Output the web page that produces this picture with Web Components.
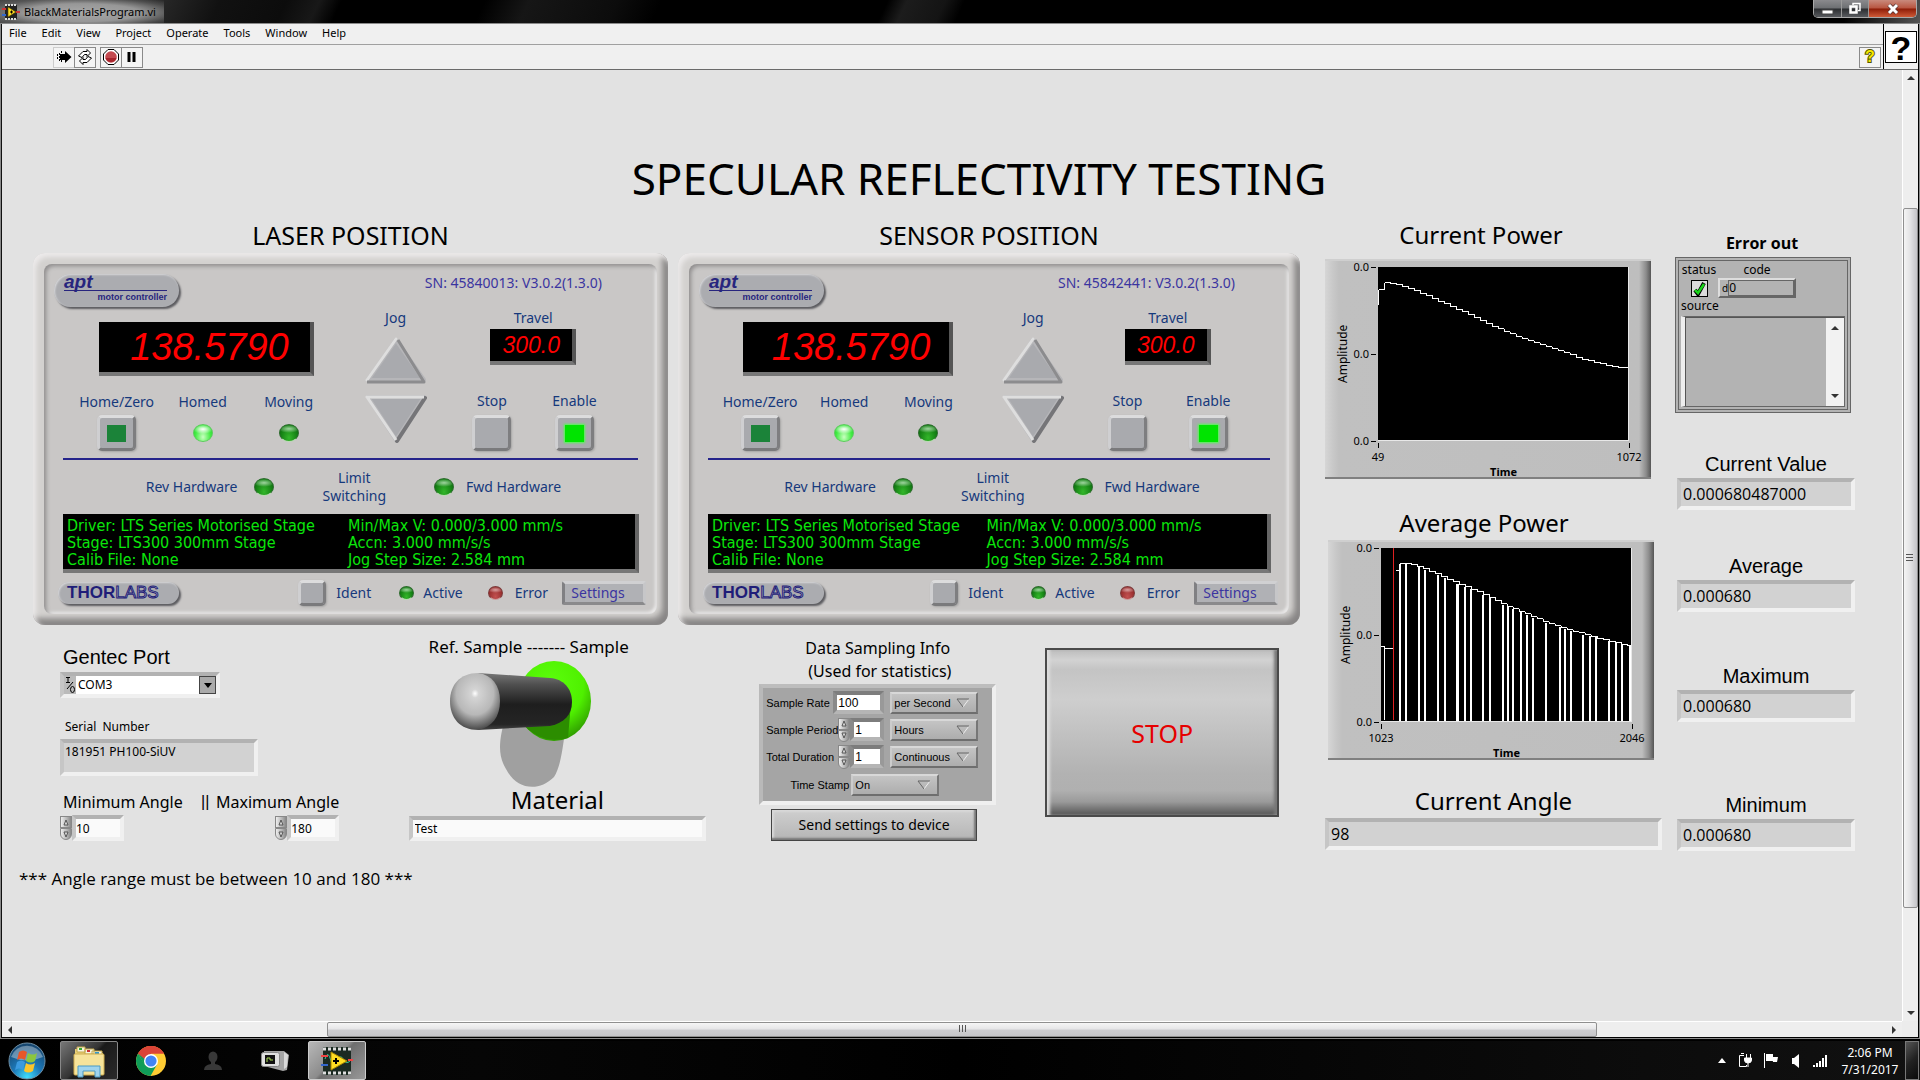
<!DOCTYPE html>
<html lang="en">
<head>
<meta charset="utf-8">
<title>BlackMaterialsProgram.vi</title>
<style>
  html, body { margin: 0; height: 100%; }
  body {
    font-family: "Noto Sans", "Open Sans", sans-serif;
    font-size: 16px;
    color: #000;
    background: #000;
    overflow: hidden;
  }
</style>
</head>
<body>
<vi-desktop></vi-desktop>
<script>
const BASE = `
  *, *::before, *::after { box-sizing: border-box; }
  button, input, select, textarea { font: inherit; color: inherit; margin: 0; }
  h1, h2, h3, p { margin: 0; font-weight: normal; }
  button { cursor: pointer; }
`;

function define(name, css, html) {
  customElements.define(name, class extends HTMLElement {
    connectedCallback() {
      if (this.shadowRoot) return;
      const root = this.attachShadow({ mode: "open" });
      const t = document.createElement("template");
      t.innerHTML = `<style>${BASE}${css}</style>` + (typeof html === "function" ? html(this) : html);
      root.append(t.content.cloneNode(true));
    }
  });
}

/* ---------- Desktop and window frame ---------- */

define("vi-desktop", `
  :host { display: flex; flex-direction: column; height: 100vh; background: #000; }
  .window { flex: 1; min-height: 0; display: flex; flex-direction: column;
    border: 2px solid #000; border-top-width: 1px; border-left-color: #111;
    outline: 1px solid #8a8a8a; outline-offset: -1px; margin: 0 0 2px; }
  .body { flex: 1; min-height: 0; display: grid; grid-template-columns: 1fr 16px; grid-template-rows: 1fr 16px; background: #ececec; }
`, `
  <title-bar>BlackMaterialsProgram.vi</title-bar>
  <div class="window">
    <window-header></window-header>
    <div class="body">
      <front-panel></front-panel>
      <scroll-bar dir="v"></scroll-bar>
      <scroll-bar dir="h"></scroll-bar>
    </div>
  </div>
  <task-bar></task-bar>
`);

define("title-bar", `
  :host { display: flex; justify-content: space-between; height: 23px; color: #000; font-size: 11px; flex: none;
    background: linear-gradient(115deg, #444 0, #333 120px, #111 200px, #0c0c0c 260px, #181818 290px, #000 310px, #000 440px, #161616 480px, #0c0c0c 560px, #000 600px, #000 46%, #1c1c1c 47%, #141414 49%, #000 50%, #000 96%, #555 100%); }
  .name { display: flex; align-items: center; gap: 4px; height: 23px; padding: 0 8px 0 2px;
    background: radial-gradient(ellipse at 50% 55%, #a8a8a8 0, #979797 50%, #6a6a6a88 80%, transparent 100%); }
  .name span { line-height: 20px; font-size: 11px; }
  svg { display: block; }
  .controls { display: flex; height: 18px; margin-right: 3px; border: 1px solid #a9a9a9; border-top: 0; border-radius: 0 0 5px 5px; overflow: hidden; }
  .controls button { border: 0; border-right: 1px solid #999; padding: 0; width: 28px; display: grid; place-items: center;
    background: linear-gradient(#8a8a8d 0, #6d6f72 48%, #2b2d30 52%, #585b5f 100%); }
  .controls button:nth-child(2) { width: 27px; }
  .controls button.close { width: 47px; border-right: 0; background: linear-gradient(#c98a7c 0, #b8543f 48%, #8d1c07 52%, #cf5a37 100%); }
`, `
  <div class="name">
    <svg width="18" height="18" viewBox="0 0 18 18">
      <rect x="3" y="2" width="12" height="14" fill="#222"/>
      <path d="M3 2h12M3 16h12" stroke="#ddd" stroke-width="2" stroke-dasharray="2 1"/>
      <path d="M0 6h4M14 9h4" stroke="#c33" stroke-width="2"/><path d="M0 12h4" stroke="#36c" stroke-width="2"/>
      <path d="M6 4l8 5-8 5z" fill="#fd2" stroke="#540" stroke-width=".6"/><path d="M8 9h3M9.500 7.500v3" stroke="#000"/>
    </svg>
    <span><slot></slot></span>
  </div>
  <div class="controls">
    <button aria-label="Minimize"><svg width="13" height="12"><rect x="1" y="7" width="11" height="4" fill="#fff" stroke="#444"/></svg></button>
    <button aria-label="Restore"><svg width="14" height="13"><path d="M5 3V1.500h7v7h-2" fill="none" stroke="#fff" stroke-width="1.500"/><rect x="2.500" y="4.500" width="6" height="6" fill="none" stroke="#fff" stroke-width="2.500"/></svg></button>
    <button class="close" aria-label="Close"><svg width="14" height="12"><path d="M3 2l8 8M11 2l-8 8" stroke="#533" stroke-width="4.500"/><path d="M3 2l8 8M11 2l-8 8" stroke="#fff" stroke-width="3"/></svg></button>
  </div>
`);

define("window-header", `
  :host { display: grid; grid-template-columns: 1fr 35px; height: 46px; flex: none; background: #f0f0f0; border-bottom: 1px solid #6a6a6a; }
  nav { display: flex; gap: 15px; align-items: center; height: 21px; padding: 0 7px 2px; font-size: 11px; border-bottom: 1px solid #a0a0a0; }
  nav a { color: #000; text-decoration: none; line-height: 18px; }
  .tools { display: flex; align-items: center; height: 24px; padding: 0 2px 0 51px; }
  .tools button { width: 22px; height: 21px; padding: 0; border: 1px solid #8a8a8a; background: #f4f4f4; display: grid; place-items: center; }
  .tools button.run { border-color: #ccc; border-right: 0; width: 21px; }
  .tools button.stop { margin-left: 4px; border-right: 0; width: 21px; }
  .tools button.help { margin-left: auto; }
  .vi { border-left: 1px solid #000; display: grid; place-items: center; }
  .vi b { width: 32px; height: 32px; border: 1px solid #000; background: #fff; display: grid; place-items: center; font: bold 34px/32px "Liberation Sans", Arial, sans-serif; }
  .help b { font: bold 16px/18px "Liberation Sans", sans-serif; color: #f4e800; -webkit-text-stroke: 2px #555500; paint-order: stroke fill; }
`, `
  <div>
    <nav><a href="#">File</a><a href="#">Edit</a><a href="#">View</a><a href="#">Project</a><a href="#">Operate</a><a href="#">Tools</a><a href="#">Window</a><a href="#">Help</a></nav>
    <div class="tools">
      <button class="run" aria-label="Run"><svg width="16" height="14"><path d="M1.500 4v6M3.500 3v8M5.500 1v12" stroke="#000" stroke-dasharray="2 1"/><path d="M4 4h5V1l6.500 6L9 13v-3H4z" fill="#000"/></svg></button>
      <button aria-label="Run continuously"><svg width="16" height="16" fill="#fff" stroke="#000"><path d="M1.500 7L6 2.500h4V.5L13.500 4 10 7.500V5.500H7.500L5 8.500z"/><path d="M14.500 9L10 13.500H6v2L2.500 12 6 8.500v2h2.500L11 7.500z"/></svg></button>
      <button class="stop" aria-label="Abort"><svg width="16" height="16"><path d="M5 .5h6L15.500 5v6L11 15.500H5L.5 11V5z" fill="#fff" stroke="#000"/><circle cx="8" cy="8" r="5.800" fill="#c44a50"/><path d="M2.500 9h11a5.800 5.800 0 0 1-11 0z" fill="#a8242c"/></svg></button>
      <button aria-label="Pause"><svg width="12" height="12"><path d="M3 1v10M8 1v10" stroke="#000" stroke-width="3"/></svg></button>
      <button class="help" aria-label="Context help"><b>?</b></button>
    </div>
  </div>
  <div class="vi"><b>?</b></div>
`);

define("scroll-bar", `
  :host { display: flex; align-items: center; justify-content: space-between; background: #eeeeee; min-width: 0; min-height: 0; }
  :host([dir="v"]) { flex-direction: column; border-left: 1px solid #fff; }
  :host([dir="h"]) { border-top: 1px solid #fff; }
  .arrow { flex: none; width: 16px; height: 16px; display: grid; place-items: center; }
  .track { flex: 1; align-self: stretch; display: flex; }
  :host([dir="v"]) .track { flex-direction: column; }
  .before { flex: 122; } .thumb { flex: 700; } .after { flex: 97; }
  :host([dir="h"]) .before { flex: 309; } :host([dir="h"]) .thumb { flex: 1268; } :host([dir="h"]) .after { flex: 289; }
  .thumb { border: 1px solid #8f8f8f; border-radius: 2px; display: grid; place-items: center; background: linear-gradient(90deg, #f4f4f4, #e2e2e4 50%, #c4c4c8); }
  :host([dir="h"]) .thumb { background: linear-gradient(#f6f6f6, #e6e6e8 45%, #cdcdd0 55%, #c6c6c9); }
`, el => {
  const v = el.getAttribute("dir") === "v";
  const a = v ? "M0 5L4 1l4 4z" : "M5 0L1 4l4 4z", b = v ? "M0 1l4 4 4-4z" : "M1 0l4 4-4 4z";
  const s = v ? 'width="8" height="6"' : 'width="6" height="8"';
  const grip = v ? "M0 1.500h7M0 4.500h7M0 7.500h7" : "M1.500 0v7M4.500 0v7M7.500 0v7";
  return `<div class="arrow"><svg ${s}><path d="${a}" fill="#333"/></svg></div>
  <div class="track"><div class="before"></div><div class="thumb"><svg width="9" height="9"><path d="${grip}" stroke="#555"/></svg></div><div class="after"></div></div>
  <div class="arrow"><svg ${s}><path d="${b}" fill="#333"/></svg></div>`;
});

/* ---------- Shared controls ---------- */

const BEVEL = `border: 4px solid; border-color: #b2b2b2 #f0f0f0 #f0f0f0 #c6c6c6;`;

define("value-field", `
  :host { display: block; font-family: "Liberation Sans", Arial, sans-serif; }
  label { display: block; text-align: center; font-size: 20px; line-height: 24px; }
  :host([large]) label { font: 24px/30px "Noto Sans", sans-serif; }
  input { display: block; width: 100%; height: 32px; margin-top: 2px; padding: 0 2px; ${BEVEL} border-radius: 0; background: #d2d2d2; font: 16px "Open Sans", sans-serif; outline: 0; }
`, el => `<label for="v">${el.getAttribute("label")}</label><input id="v" readonly value="${el.getAttribute("value")}">`);

define("spin-arrows", `
  :host { display: flex; flex-direction: column; width: 12px; height: 24px; flex: none; }
  button { flex: 1; padding: 0; border: 1px solid #888; background: linear-gradient(90deg, #eee, #b4b4b4 60%, #888); display: grid; place-items: center; }
  button:first-child { border-radius: 6px 6px 0 0; border-bottom: 0; }
  button:last-child { border-radius: 0 0 6px 6px; }
`, `
  <button aria-label="Increase"><svg width="6" height="7"><path d="M3 1L1 6h4z" fill="#ddd" stroke="#555"/></svg></button>
  <button aria-label="Decrease"><svg width="6" height="7"><path d="M3 6L1 1h4z" fill="#ddd" stroke="#555"/></svg></button>
`);

/* ---------- Motor controller ---------- */

define("lamp-led", `
  :host { display: block; width: 20px; height: 18px; flex: none; }
  :host([small]) { width: 15px; height: 14px; }
  i { display: block; width: 100%; height: 100%; border-radius: 50%; border: 1px solid #2c6a2c; border-bottom-color: #b7dcb0;
    background: radial-gradient(ellipse 60% 25% at 50% 24%, #9fd49f 0, transparent 100%), radial-gradient(ellipse at 50% 80%, #33b62a, #127c12 70%, #0c5c10); }
  :host([tone="lit"]) i { border-color: #5ccc5c; background: radial-gradient(ellipse 55% 30% at 50% 26%, #fff 0, transparent 100%), radial-gradient(ellipse at 50% 75%, #c8ffc0, #42ec42 60%, #22cc30); }
  :host([tone="red"]) i { border-color: #7c3a3a; border-bottom-color: #c99; background: radial-gradient(ellipse 60% 25% at 50% 24%, #d8a0a0 0, transparent 100%), radial-gradient(ellipse at 50% 80%, #c25050, #9a3030 70%, #7c2020); }
`, `<i></i>`);

define("square-key", `
  :host { display: block; width: 39px; height: 36px; flex: none; }
  :host([small]) { width: 28px; height: 26px; }
  button { width: 100%; height: 100%; padding: 0; border: 3px solid; border-color: #dcdcdd #7e7e80 #7a7a7c #cfcfd1; border-radius: 5px; background: #a9aaae; display: grid; place-items: center; box-shadow: 1px 1px 2px #8888; }
  i { width: 19px; height: 17px; background: #1b8339; }
  :host([tone="lit"]) i { background: #00e400; box-shadow: 0 0 2px 1px #4dff4d; }
  :host([tone="none"]) i { display: none; }
`, el => `<button aria-label="${el.getAttribute("label")}"><i></i></button>`);

define("motor-controller", `
  :host { display: block; padding: 11px; border-radius: 12px; color: #16397c; font-size: 14px; line-height: 18px; background: #d3d1cf;
    box-shadow: inset 3px 4px 5px #eceaea, inset -4px -5px 5px #878585, inset -7px -8px 5px #b0aeac; }
  .face { height: 350px; display: flex; flex-direction: column; padding-top: 10px; border-radius: 8px; background: #c9c7c6;
    box-shadow: inset 2px 2px 4px #8d8b8b, inset -2px -2px 3px #efeeee; }
  .head { display: flex; justify-content: space-between; padding: 0 9% 0 10px; color: #3b35a0; }
  .pill { background: #abacb0; box-shadow: 2px 2px 2px #5c5c60, inset 1px 1px 2px #d8d8da; }
  .apt { width: 125px; height: 33px; border-radius: 17px; padding: 0 12px 0 10px; font: bold 9px/9px "Liberation Sans", Arial, sans-serif; color: #27257e; text-align: right; }
  .apt b { display: block; text-align: left; font-size: 19px; line-height: 16px; font-style: italic; border-bottom: 1px solid #27257e; margin-bottom: 2px; }
  .main { display: grid; grid-template-columns: 296fr 110fr 206fr; height: 151px; }
  .display { background: #000; border-right: 4px solid #555; border-bottom: 4px solid #777; color: #f00; font-family: "Liberation Sans", Arial, sans-serif; font-style: italic; text-align: center; }
  .left { display: flex; flex-direction: column; padding: 15px 3% 0 10%; }
  .left .display { height: 54px; font-size: 38px; line-height: 50px; margin: 0 7% 0 10%; padding-left: 10px; }
  .trio { display: grid; grid-template-columns: 1fr 1fr 1fr; margin-top: 17px; row-gap: 4px; place-items: center; }
  .jog { padding-top: 2px; text-align: center; }
  .jog button { display: block; margin: 0 auto; padding: 0; border: 0; background: none; }
  .jog .up { margin-top: 10px; margin-bottom: 6px; }
  .right { padding: 2px 20% 0 0; text-align: center; }
  .right .display { width: 86px; height: 36px; margin: 2px auto 27px; font-size: 23px; line-height: 32px; }
  .duo { display: grid; grid-template-columns: 1fr 1fr; row-gap: 5px; place-items: center; }
  hr { margin: 0 19px; border: 0; height: 2px; flex: none; background: #25248b; }
  .limits { display: flex; justify-content: center; align-items: center; margin-top: 9px; padding-left: 6px; text-align: center; }
  .limits p { margin: 0 48px; }
  .limits .rev { margin-right: 17px; } .limits .fwd { margin-left: 12px; }
  .info { margin: 9px 18px 0 19px; height: 59px; flex: none; padding: 3px 0 0 4px; display: grid; grid-template-columns: 284fr 290fr; background: #000; border-right: 4px solid #666; border-bottom: 4px solid #777;
    color: #0be60b; font-family: "DejaVu Sans Condensed", "DejaVu Sans", Verdana, sans-serif; font-size: 16px; line-height: 17px; white-space: nowrap; }
  .foot { display: flex; align-items: center; margin-top: 7px; padding: 0 11px 0 14px; white-space: nowrap; }
  .thor { width: 121px; height: 22px; border-radius: 11px; padding-left: 9px; margin-right: auto; font: bold 17px/21px "Liberation Sans", Arial, sans-serif; color: #1f1d78; }
  .thor span { color: #c0c0c8; -webkit-text-stroke: 1px #1f1d78; font-weight: normal; }
  .foot .t1 { margin: 0 28px 0 10px; } .foot .t2 { margin: 0 25px 0 9px; } .foot .t3 { margin: 0 14px 0 12px; }
  .settings { width: 84px; height: 24px; padding: 0 12px 0 0; border: 3px solid; border-color: #d0d0d2 #c6c6c8 #8a8a8c #808083; border-radius: 2px; background: #b0b1b5; color: #3b35a0; line-height: 18px; }
`, el => `
  <div class="face">
    <div class="head"><div class="pill apt"><b>apt</b>motor controller</div><div>SN: ${el.getAttribute("sn")}: V3.0.2(1.3.0)</div></div>
    <div class="main">
      <div class="left">
        <div class="display">${el.getAttribute("position")}</div>
        <div class="trio"><span>Home/Zero</span><span>Homed</span><span>Moving</span>
          <square-key label="Home/Zero"></square-key><lamp-led tone="lit"></lamp-led><lamp-led></lamp-led></div>
      </div>
      <div class="jog">Jog
        <button class="up" aria-label="Jog up"><svg width="62" height="47" viewBox="0 0 62 47"><path d="M31 3L59 43H3z" fill="#a9aaae" stroke="#b6b6b9" stroke-width="4" stroke-linejoin="round"/><path d="M31 2L2 43" stroke="#dedede" stroke-width="3" fill="none" stroke-linecap="round"/><path d="M2 45h57L33 3" stroke="#8c8c8e" stroke-width="3" fill="none" stroke-linejoin="round"/></svg></button>
        <button aria-label="Jog down"><svg width="62" height="50" viewBox="0 0 62 50"><path d="M3 3h56L31 46z" fill="#a9aaae" stroke="#b6b6b9" stroke-width="4" stroke-linejoin="round"/><path d="M60 4L32 47" stroke="#757578" stroke-width="4" stroke-linecap="round"/><path d="M31 46L2 3h57" stroke="#dedede" stroke-width="3" fill="none" stroke-linejoin="round"/></svg></button>
      </div>
      <div class="right">Travel
        <div class="display">300.0</div>
        <div class="duo"><span>Stop</span><span>Enable</span><square-key tone="none" label="Stop"></square-key><square-key tone="lit" label="Enable"></square-key></div>
      </div>
    </div>
    <hr>
    <div class="limits"><span class="rev">Rev Hardware</span><lamp-led></lamp-led><p>Limit<br>Switching</p><lamp-led></lamp-led><span class="fwd">Fwd Hardware</span></div>
    <div class="info"><div>Driver: LTS Series Motorised Stage<br>Stage: LTS300 300mm Stage<br>Calib File: None</div><div>Min/Max V: 0.000/3.000 mm/s<br>Accn: 3.000 mm/s/s<br>Jog Step Size: 2.584 mm</div></div>
    <div class="foot"><div class="pill thor">THOR<span>LABS</span></div>
      <square-key small tone="none" label="Ident"></square-key><span class="t1">Ident</span>
      <lamp-led small></lamp-led><span class="t2">Active</span>
      <lamp-led small tone="red"></lamp-led><span class="t3">Error</span>
      <button class="settings">Settings</button></div>
  </div>
`);

/* ---------- Graphs ---------- */

function sample(points, x) {
  for (let i = 1; i < points.length; i++) {
    const [x0, y0] = points[i - 1], [x1, y1] = points[i];
    if (x <= x1) return y0 + (y1 - y0) * (x - x0) / (x1 - x0);
  }
  return points[points.length - 1][1];
}
function staircase(points) {
  let x = points[0][0], d = `M${x} ${points[0][1]}`;
  while (x < 251) { x = Math.min(251, x + 6); d += `H${x}V${Math.round(sample(points, x))}`; }
  return d;
}
const CURVES = {
  current: () => {
    const p = [[7,16],[27,20],[53,31],[84,45],[116,60],[147,73],[175,82],[203,92],[231,99],[251,102]];
    return `<path d="M1 38V23H7V16" /><path d="${staircase(p)}"/>`;
  },
  average: () => {
    const p = [[19,16],[33,17],[57,27],[77,36],[97,44],[122,57],[140,64],[166,75],[191,83],[215,90],[251,99]];
    const bars = [19,25,38,44,57,64,76,77,84,90,102,109,122,128,133,141,147,153,166,180,185,191,203,210,216,229,236,242,250];
    return `<path d="M0 99H4V173M4 101H12V102"/><path d="M13 0V173" stroke="#e02020"/><path d="M15 23H19V16"/><path d="${staircase(p)}"/>
      <path stroke-width="2" d="${bars.map(b => `M${b} ${Math.round(sample(p, b))}V174`).join("")}"/>`;
  }
};

define("power-graph", `
  :host { display: block; }
  h2 { font-size: 24px; line-height: 30px; text-align: center; padding-right: 14px; margin-bottom: 9px; }
  :host([tight]) h2 { margin-bottom: 2px; }
  .frame { height: 220px; padding: 6px 22px 0 10px; display: grid; grid-template-columns: 16px 27px 1fr; grid-template-rows: 174px 24px 14px; font-size: 11px; line-height: 14px;
    background: linear-gradient(90deg, #d6d6d6 0, #c8c8c8 8px, #c0c0c0 14px, #bebebe calc(100% - 12px), #8c8c8c calc(100% - 5px), #555 100%);
    border-top: 2px solid #cfcfcf; box-shadow: inset 0 -2px #808080; }
  .amp { writing-mode: vertical-rl; transform: rotate(180deg); text-align: center; font-size: 12px; line-height: 16px; }
  .ys { display: flex; flex-direction: column; justify-content: space-between; margin: -7px 0; }
  .ys span { display: flex; align-items: center; justify-content: flex-end; gap: 2px; padding-right: 2px; }
  .ys span::after { content: ""; width: 5px; height: 1px; background: #000; }
  .plot { background: #000; min-width: 0; border-bottom: 1px solid #e8e8e8; border-right: 1px solid #e8e8e8; }
  .plot svg { display: block; width: 100%; height: 100%; }
  .xs { grid-column: 3; display: flex; justify-content: space-between; }
  .xs span { width: 32px; margin: 0 -16px; display: flex; flex-direction: column; align-items: center; gap: 2px; padding-top: 2px; }
  .xs span::before { content: ""; width: 1px; height: 5px; background: #000; flex: none; }
  .time { grid-column: 3; text-align: center; font-weight: bold; }
`, el => `
  <h2>${el.getAttribute("label")}</h2>
  <div class="frame">
    <div class="amp">Amplitude</div>
    <div class="ys"><span>0.0</span><span>0.0</span><span>0.0</span></div>
    <div class="plot"><svg viewBox="0 0 251 174" preserveAspectRatio="none" fill="none" stroke="#fff" stroke-width="1" shape-rendering="crispEdges">${CURVES[el.getAttribute("curve")]()}</svg></div>
    <div class="xs"><span>${el.getAttribute("from")}</span><span>${el.getAttribute("to")}</span></div>
    <div class="time">Time</div>
  </div>
`);

define("error-cluster", `
  :host { display: block; font-size: 12px; line-height: 16px; }
  h3 { text-align: center; font: bold 16px/24px "Open Sans", sans-serif; padding-right: 8px; }
  .box { margin: 2px 4px 0 -2px; height: 156px; padding: 1px 2px 2px 2px; background: #b3b3b3; border: 4px double #666; display: flex; flex-direction: column; }
  .top { display: grid; grid-template-columns: 36px 80px; align-items: center; justify-items: center; }
  input[type=checkbox] { appearance: none; width: 17px; height: 17px; border: 1px solid #000; background: #dcdcdc url("data:image/svg+xml,%3Csvg xmlns='http://www.w3.org/2000/svg' viewBox='0 0 15 15'%3E%3Cpath d='M3 9l3 4 6-11' fill='none' stroke='%23000' stroke-width='4'/%3E%3Cpath d='M3 9l3 3 6-9' fill='none' stroke='%2319d419' stroke-width='2.500'/%3E%3C/svg%3E"); }
  .code { display: flex; align-items: center; height: 20px; width: 78px; border: 2px solid; border-color: #ddd #666 #666 #ddd; font-size: 10px; padding-left: 2px; }
  .code input { flex: 1; min-width: 0; height: 16px; border: 1px solid #666; padding: 0; background: #b3b3b3; font-size: 12px; }
  .source { flex: 1; min-height: 0; display: flex; border: 1px solid #666; border-left: 4px solid #eee; box-shadow: inset 1px 1px #555; margin: 2px 0 0; padding: 1px 0 0 1px; }
  textarea { flex: 1; min-width: 0; resize: none; border: 0; background: #b3b3b3; padding: 0; }
  .sb { width: 18px; background: #f2f2f2; display: flex; flex-direction: column; justify-content: space-between; align-items: center; padding: 7px 0; }
`, `
  <h3>Error out</h3>
  <div class="box">
    <div class="top"><label for="st">status</label><label for="cd">code</label>
      <input id="st" type="checkbox" checked><div class="code">d<input id="cd" readonly value="0"></div></div>
    <label class="src" for="sr">source</label>
    <div class="source"><textarea id="sr" readonly></textarea><div class="sb"><svg width="8" height="6"><path d="M0 5L4 1l4 4z" fill="#333"/></svg><svg width="8" height="6"><path d="M0 1l4 4 4-4z" fill="#333"/></svg></div></div>
  </div>
`);

/* ---------- Lower controls ---------- */

define("port-controls", `
  :host { display: block; padding: 20px 0 0 27px; font-size: 12px; }
  .h { display: block; font: 20px/24px "Liberation Sans", Arial, sans-serif; padding-left: 3px; }
  .combo { display: flex; width: 160px; height: 26px; margin-top: 3px; ${BEVEL} background: #fff; }
  .combo i { width: 12px; background: #bbb; flex: none; }
  .combo .pick { flex: 1; display: grid; grid-template-columns: 1fr 17px; }
  .combo select { grid-area: 1 / 1 / 2 / 3; appearance: none; border: 0; background: none; padding: 0 2px; line-height: 18px; }
  .combo b { grid-area: 1 / 2 / 2 / 3; border: 1px solid #444; background: #aaa; display: grid; place-items: center; pointer-events: none; }
  .serial { display: block; line-height: 16px; margin-top: 21px; padding-left: 5px; white-space: pre; }
  .sn { display: block; width: 198px; height: 37px; margin-top: 4px; ${BEVEL} border-radius: 0; background: #d2d2d2; padding: 0 1px; line-height: 18px; resize: none; outline: 0; overflow: hidden; white-space: nowrap; }
  .angles { display: grid; grid-template-columns: 138px 15px auto; margin-top: 16px; font-size: 16px; line-height: 20px; row-gap: 3px; padding-left: 3px; justify-content: start; white-space: nowrap; }
  .bars { font-family: "Liberation Sans", Arial, sans-serif; }
  .spin { display: flex; align-items: center; font-size: 12px; margin-left: -3px; }
  .spin input { width: 52px; height: 26px; ${BEVEL} border-radius: 0; background: #fafafa; padding: 0; outline: 0; }
  .max { grid-column: 3; justify-self: end; }
`, `
  <label class="h" for="port">Gentec Port</label>
  <div class="combo">
    <i><svg width="12" height="18" fill="none" stroke="#000"><path d="M2 1.500h4M4 1.500v5M2 6.500h4M9 6L3 13"/><ellipse cx="8.500" cy="13.500" rx="2" ry="3"/></svg></i>
    <div class="pick"><select id="port"><option>COM3</option></select><b><svg width="8" height="5"><path d="M0 0h8L4 5z"/></svg></b></div>
  </div>
  <label class="serial" for="sn">Serial  Number</label>
  <textarea class="sn" id="sn" readonly>181951 PH100-SiUV</textarea>
  <div class="angles">
    <label for="mn">Minimum Angle</label><span class="bars">||</span><label for="mx">Maximum Angle</label>
    <div class="spin"><spin-arrows></spin-arrows><input id="mn" value="10"></div>
    <div class="spin max"><spin-arrows></spin-arrows><input id="mx" value="180"></div>
  </div>
`);

define("sample-switch", `
  :host { display: block; padding-top: 12px; font-size: 17px; line-height: 20px; }
  p { padding-left: 20px; white-space: nowrap; }
  button { display: block; margin: 4px 0 0 41px; padding: 0; border: 0; background: none; width: 141px; height: 126px; }
  svg { display: block; }
  label { display: block; text-align: center; font-size: 24px; line-height: 25px; }
  input { display: block; width: 100%; height: 25px; margin-top: 4px; ${BEVEL} border-radius: 0; background: #fafafa; font-size: 12px; padding: 0 2px; outline: 0; }
`, `
  <p>Ref. Sample ------- Sample</p>
  <button aria-label="Sample selector">
    <svg width="141" height="126" viewBox="0 0 141 126">
      <defs>
        <radialGradient id="g" cx=".45" cy=".3" r=".75"><stop offset="0" stop-color="#5cff0c"/><stop offset=".6" stop-color="#4ff000"/><stop offset="1" stop-color="#2a8e00"/></radialGradient>
        <linearGradient id="s" x1="0" y1="0" x2="0" y2="1"><stop offset="0" stop-color="#777"/><stop offset=".2" stop-color="#505050"/><stop offset=".55" stop-color="#1e1e1e"/><stop offset=".9" stop-color="#252525"/><stop offset="1" stop-color="#444"/></linearGradient>
        <radialGradient id="k" cx=".5" cy=".36" r=".62"><stop offset="0" stop-color="#fff"/><stop offset=".12" stop-color="#d4d4d4"/><stop offset=".6" stop-color="#b8b8b8"/><stop offset="1" stop-color="#505050"/></radialGradient>
      </defs>
      <path d="M56 55C48 80 48 95 56 108C66 128 88 132 104 116C112 104 114 76 116 62z" fill="#a0a0a0"/>
      <ellipse cx="104" cy="40" rx="37" ry="40" fill="url(#g)"/>
      <path d="M72 62Q90 84 118 77L121 42L104 56z" fill="#2c8d00"/>
      <path d="M28 12L100 17C114 18 122 28 122 41C122 54 114 62 100 65L28 69z" fill="url(#s)"/>
      <path d="M28 12C10 12 0 24 0 40C0 57 10 69 28 69C42 66 50 56 50 40C50 24 42 14 28 12z" fill="url(#k)"/>
    </svg>
  </button>
  <label for="mat">Material</label>
  <input id="mat" value="Test">
`);

define("sampling-info", `
  :host { display: block; padding-top: 12px; }
  h3 { text-align: center; font-size: 16px; line-height: 23px; }
  .box { margin-top: 1px; height: 121px; padding: 1px 14px 3px 3px; border: 4px solid; border-color: #bdbdbd #efefef #efefef #b9b9b9; background: #a5a5a5;
    font: 11px/14px "Liberation Sans", Arial, sans-serif; }
  .row { display: flex; align-items: center; height: 27px; white-space: nowrap; }
  .row label { flex: 1; }
  .row input { height: 23px; width: 51px; border: 4px solid; border-color: #7d7d7d #999 #b5b5b5 #8a8a8a; border-radius: 0; padding: 0 1px; background: #fff; font-size: 12px; outline: 0; }
  .row .n { width: 34px; }
  .pick { display: grid; width: 88px; height: 22px; margin-left: 6px; border: 2px solid; border-color: #d8d8d8 #777 #6e6e6e #ccc; background: linear-gradient(#c4c4c4, #adadad); align-items: center; font-size: 12px; }
  .pick select { grid-area: 1 / 1; appearance: none; border: 0; background: none; padding: 0 0 0 2px; width: 100%; font-size: 11px; }
  .pick svg { grid-area: 1 / 1; justify-self: end; margin-right: 6px; pointer-events: none; }
  .last { padding-right: 39px; height: 29px; }
  .last label { text-align: right; } .last .pick { margin-left: 2px; }
  .send { display: block; width: 206px; height: 32px; margin: 4px 0 0 12px; padding: 0 0 2px; border: 1px solid #444; font-size: 14px; background: linear-gradient(#cfcfcf, #b5b5b5); box-shadow: inset -2px -2px 2px #777, inset 2px 2px 2px #d8d8d8; }
`, () => {
  const tri = `<svg width="14" height="10"><path d="M13 1L7 9" stroke="#eee" fill="none"/><path d="M13 1H1l6 8" stroke="#666" fill="none"/></svg>`;
  const pick = (id, v) => `<div class="pick"><select id="${id}" aria-label="${id}"><option>${v}</option></select>${tri}</div>`;
  return `
  <h3>Data Sampling Info<br>&nbsp;(Used for statistics)</h3>
  <div class="box">
    <div class="row"><label for="rate">Sample Rate</label><input id="rate" value="100">${pick("rate-unit", "per Second")}</div>
    <div class="row"><label for="period">Sample Period</label><spin-arrows></spin-arrows><input class="n" id="period" value="1">${pick("period-unit", "Hours")}</div>
    <div class="row"><label for="total">Total Duration</label><spin-arrows></spin-arrows><input class="n" id="total" value="1">${pick("total-unit", "Continuous")}</div>
    <div class="row last"><label for="stamp">Time Stamp</label>${pick("stamp", "On")}</div>
  </div>
  <button class="send">Send settings to device</button>`;
});

define("stop-button", `
  :host { display: block; padding-top: 23px; }
  button { width: 100%; height: 169px; border: 2px solid #4a4a4a; color: #e60000; font-size: 25px;
    background: linear-gradient(#bdbdbd 0, #d2d2d2 6%, #c4c4c4 12%, #cecece 30%, #b2b2b2 75%, #b0b0b0 85%, #9a9a9a 92%, #555 100%);
    box-shadow: inset 4px 0 3px -1px #ddd, inset -4px 0 3px -1px #777; }
`, `<button><slot></slot></button>`);

/* ---------- Front panel ---------- */

define("front-panel", `
  :host { display: block; min-width: 0; overflow: hidden; background: #e2e2e2; padding: 78px 47px 0 17px; }
  h1 { font-size: 44px; line-height: 60px; text-align: center; padding-left: 84px; }
  h2 { font-size: 25px; line-height: 30px; text-align: center; }
  .main { display: grid; grid-template-columns: minmax(0, 1277fr) minmax(0, 337fr) minmax(0, 178fr); gap: 0 15px; padding-left: 14px; margin-top: 12px; }
  .motion { padding-right: 10px; }
  .stages { display: grid; grid-template-columns: 635fr 622fr; column-gap: 10px; }
  .stages h2 { margin-bottom: 3px; }
  .lower { display: grid; grid-template-columns: 376fr 298fr 53fr 236fr 49fr 234fr 21fr; }
  sampling-info { grid-column: 4; } stop-button { grid-column: 6; }
  .g1 { margin: 0 11px 29px 0; }
  .g2 { margin: 0 8px 26px 3px; }
  .readouts { padding-top: 11px; }
  .m1 { margin-top: 39px; } .m2 { margin-top: 44px; } .m3 { margin-top: 52px; } .m4 { margin-top: 71px; }
  .note { font-family: "Open Sans", sans-serif; font-size: 17px; line-height: 24px; margin-top: 16px; white-space: nowrap; }
`, `
  <h1>SPECULAR REFLECTIVITY TESTING</h1>
  <div class="main">
    <div class="motion">
      <div class="stages">
        <h2>LASER POSITION</h2><h2>SENSOR POSITION</h2>
        <motor-controller sn="45840013" position="138.5790"></motor-controller>
        <motor-controller sn="45842441" position="138.5790"></motor-controller>
      </div>
      <div class="lower">
        <port-controls></port-controls>
        <sample-switch></sample-switch>
        <sampling-info></sampling-info>
        <stop-button>STOP</stop-button>
      </div>
    </div>
    <div class="graphs">
      <power-graph class="g1" label="Current Power" curve="current" from="49" to="1072"></power-graph>
      <power-graph class="g2" tight label="Average Power" curve="average" from="1023" to="2046"></power-graph>
      <value-field large label="Current Angle" value="98"></value-field>
    </div>
    <div class="readouts">
      <error-cluster></error-cluster>
      <value-field class="m1" label="Current Value" value="0.000680487000"></value-field>
      <value-field class="m2" label="Average" value="0.000680"></value-field>
      <value-field class="m3" label="Maximum" value="0.000680"></value-field>
      <value-field class="m4" label="Minimum" value="0.000680"></value-field>
    </div>
  </div>
  <p class="note">*** Angle range must be between 10 and 180 ***</p>
`);

/* ---------- Taskbar ---------- */

define("task-bar", `
  :host { display: flex; align-items: stretch; height: 39px; flex: none; background: linear-gradient(90deg, #000, #060606 25%, #000 50%, #0a0a0a 80%, #111); color: #fff; }
  button { width: 58px; margin-right: 4px; padding: 0; border: 1px solid transparent; border-radius: 2px; background: none; display: grid; place-items: center; }
  .orb { width: 54px; margin-right: 6px; }
  .open { border-color: #888; background: linear-gradient(135deg, #777, #333 45%, #1a1a1a 50%, #2a2a2a); }
  .active { border-color: #ccc; background: linear-gradient(135deg, #b8b8b8, #8c8c8c 45%, #6e6e6e 50%, #999); }
  svg { display: block; }
  .tray { margin-left: auto; display: flex; align-items: center; gap: 12px; }
  .clock { font-size: 12px; line-height: 17px; text-align: center; width: 60px; }
  .peek { width: 14px; margin: 0 1px 0 5px; border: 1px solid #777; background: linear-gradient(135deg, #555, #222 50%, #0a0a0a); }
`, `
  <button class="orb" aria-label="Start"><svg width="38" height="38" viewBox="0 0 38 38">
    <defs><radialGradient id="o" cx=".5" cy=".95" r=".9"><stop offset="0" stop-color="#3fe0ff"/><stop offset=".45" stop-color="#1c78b8"/><stop offset="1" stop-color="#16466f"/></radialGradient></defs>
    <circle cx="19" cy="19" r="18" fill="url(#o)" stroke="#6f8fa5"/><path d="M3 15A17 17 0 0 1 35 15Q19 22 3 15z" fill="#fff" opacity=".35"/>
    <path d="M11 10q4-3 8 0l-2 8q-4-3-8 0z" fill="#e8562a"/><path d="M20 11q5 3 9 0l-2 8q-4 3-9 0z" fill="#8cc63e"/><path d="M9 20q4-3 8 0l-2 8q-4-3-8 0z" fill="#3a9ae0"/><path d="M18 21q4 3 9 0l-2 8q-5 3-9 0z" fill="#fbc52c"/></svg></button>
  <button class="open" aria-label="Explorer"><svg width="34" height="34" viewBox="0 0 34 34"><path d="M3 5h10v4h18v22H3z" fill="#e8cf78"/><path d="M5 3h8v5H5zM13 5h9v5h-9zM20 7h10v5H20z" fill="#f7f3df" stroke="#c4a848"/><path d="M7 4h3v2H7z" fill="#3a3"/><path d="M15 6h3v2h-3z" fill="#c33"/><path d="M23 8h4v2h-4z" fill="#39c"/><rect x="2" y="10" width="30" height="21" rx="1" fill="#f6e39a" stroke="#cfae50"/><path d="M6 33V22h22v11h-5v-6H11v6z" fill="#9fd4ee" stroke="#4a9ac4"/></svg></button>
  <button aria-label="Chrome"><svg width="32" height="32" viewBox="0 0 32 32"><circle cx="16" cy="16" r="15" fill="#fc3"/><path d="M16 16L3 8.500A15 15 0 0 1 29 8.500H16z" fill="#db4437"/><path d="M3 8.500A15 15 0 0 0 15.500 31L22 19.500 10 20z" fill="#0f9d58"/><path d="M3 8.500L9.500 20 16 9z" fill="#0f9d58"/><path d="M3 8.500A15 15 0 0 1 29 8.500H16L9.500 14z" fill="#db4437"/><circle cx="16" cy="16" r="7" fill="#fff"/><circle cx="16" cy="16" r="5.600" fill="#4285f4"/></svg></button>
  <button aria-label="User"><svg width="22" height="22" viewBox="0 0 22 22" fill="#383838"><ellipse cx="11" cy="7" rx="4.500" ry="5.500"/><path d="M9 11h4v3q7 1 7 6H2q0-5 7-6z"/></svg></button>
  <button aria-label="Measurement explorer"><svg width="30" height="22" viewBox="0 0 30 22"><path d="M4 1h20l5 4-2 15-4 1L4 16z" fill="#a4a4a4"/><path d="M24 2l4 3-1 12-3 2z" fill="#d8d8d8"/><rect x="1.500" y="2.500" width="18" height="14" rx="2" fill="#e0e0e0" stroke="#888"/><rect x="5" y="5" width="10" height="9" fill="#111"/><path d="M7 12V8h3v2h3" stroke="#ad5" fill="none"/></svg></button>
  <button class="active" aria-label="LabVIEW"><svg width="32" height="32" viewBox="0 0 32 32"><rect x="2" y="2" width="28" height="28" fill="#1b2a22"/><path d="M2 4h28M2 28h28" stroke="#ddd" stroke-width="3" stroke-dasharray="3 2"/><path d="M4 14q3-10 6 2t6 2 6-4 7 2" stroke="#3c9" fill="none"/><path d="M0 11h7M27 15h5" stroke="#e44" stroke-width="2"/><path d="M0 20h7" stroke="#36c" stroke-width="2"/><path d="M10 7l16 9-16 9z" fill="#fd2" stroke="#a80"/><path d="M12 16h6M15 13v6" stroke="#000" stroke-width="2"/></svg></button>
  <div class="tray">
    <svg width="8" height="5"><path d="M0 5L4 0l4 5z" fill="#fff"/></svg>
    <svg width="14" height="15" fill="none" stroke="#fff"><path d="M6 2.500H1.500v11h7V12M3 .5h3M8.500 1v4M12.500 1v4"/><path d="M6.500 5h7v2q0 3-3.500 3T6.500 7z" fill="#fff"/><path d="M10 10v4"/></svg>
    <svg width="15" height="15" fill="#fff"><path d="M0 0h1v15H0zM2 1h7v7H2zM8 4h6l-1 5H9z"/></svg>
    <svg width="10" height="14" fill="#fff"><path d="M1 4h2v6H1zM3 4l5-4v14l-5-4z"/></svg>
    <svg width="15" height="12" fill="#fff"><path d="M0 10h2v2H0zM3 8h2v4H3zM6 6h2v6H6zM9 3h2v9H9zM12 0h2v12h-2z"/></svg>
    <div class="clock">2:06 PM<br>7/31/2017</div>
  </div>
  <div class="peek"></div>
`);
</script>
</body>
</html>
